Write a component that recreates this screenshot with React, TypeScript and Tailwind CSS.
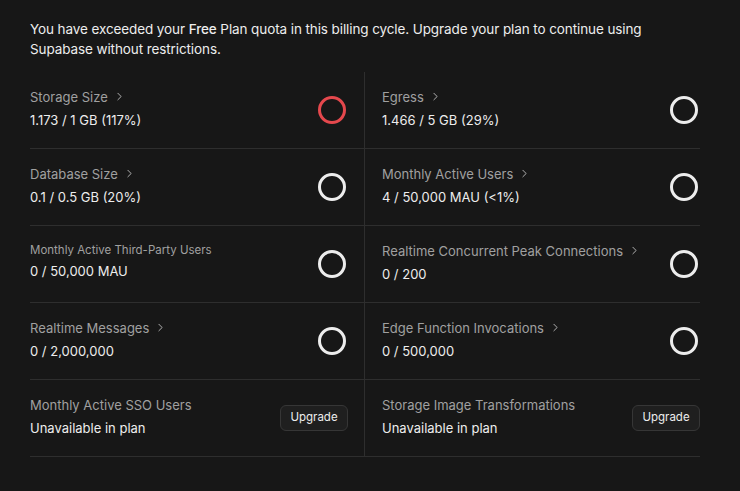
import React from "react";
import { ChevronRight } from "lucide-react";

type Item = {
  title: string;
  value: string;
  link?: boolean;
  small?: boolean;
  over?: boolean;
  upgrade?: boolean;
};

const items: Item[] = [
  { title: "Storage Size", value: "1.173 / 1 GB (117%)", link: true, over: true },
  { title: "Egress", value: "1.466 / 5 GB (29%)", link: true },
  { title: "Database Size", value: "0.1 / 0.5 GB (20%)", link: true },
  { title: "Monthly Active Users", value: "4 / 50,000 MAU (<1%)", link: true },
  { title: "Monthly Active Third-Party Users", value: "0 / 50,000 MAU", small: true },
  { title: "Realtime Concurrent Peak Connections", value: "0 / 200", link: true },
  { title: "Realtime Messages", value: "0 / 2,000,000", link: true },
  { title: "Edge Function Invocations", value: "0 / 500,000", link: true },
  { title: "Monthly Active SSO Users", value: "Unavailable in plan", upgrade: true },
  { title: "Storage Image Transformations", value: "Unavailable in plan", upgrade: true },
];

const Ring = ({ over }: { over?: boolean }) => (
  <svg width="32" height="32" viewBox="0 0 32 32" className="shrink-0">
    <circle
      cx="16"
      cy="16"
      r="12.5"
      fill="none"
      strokeWidth="3"
      stroke={over ? "#e5484d" : "#ededed"}
    />
  </svg>
);

const App = () => {
  return (
    <div
      className="min-h-[491px] w-[740px] bg-[#171717] pl-[30px] pt-[19px] text-[#ededed]"
      style={{ fontFamily: "Inter, 'Noto Sans', sans-serif" }}
    >
      <div className="w-[670px]">
        <p className="text-[13.5px] leading-5 tracking-[-0.1px] text-[#ededed]">
          You have exceeded your <span className="font-medium">Free</span> Plan
          quota in this billing cycle. Upgrade your plan to continue using
          Supabase without restrictions.
        </p>
        <div className="mt-[13px] grid grid-cols-2">
          {items.map((item, i) => (
            <div
              key={item.title}
              className={
                i % 2 === 0
                  ? "flex h-[77px] items-center justify-between border-b border-r border-[#2e2e2e] pr-4"
                  : "flex h-[77px] items-center justify-between border-b border-[#2e2e2e] pl-[17px]"
              }
            >
              <div
                className={
                  item.small
                    ? "flex flex-col gap-[3px] pb-[6px]"
                    : "flex flex-col gap-[3px] pb-[4px]"
                }
              >
                <div
                  className={
                    item.small
                      ? "flex items-center text-[11.5px] leading-4 text-[#a0a0a0]"
                      : "flex items-center text-[13px] leading-5 text-[#a0a0a0]"
                  }
                >
                  {item.title}
                  {item.link && (
                    <ChevronRight
                      size={13}
                      strokeWidth={1.5}
                      className="ml-[5px] text-[#d0d0d0]"
                    />
                  )}
                </div>
                <div className="text-[13px] leading-5 text-[#ededed]">
                  {item.value}
                </div>
              </div>
              {item.upgrade ? (
                <button className="h-[26px] w-[68px] rounded-md border border-[#363636] bg-[#1f1f1f] text-[11.5px] text-[#ededed]">
                  Upgrade
                </button>
              ) : (
                <Ring over={item.over} />
              )}
            </div>
          ))}
        </div>
      </div>
    </div>
  );
};

export default App;
